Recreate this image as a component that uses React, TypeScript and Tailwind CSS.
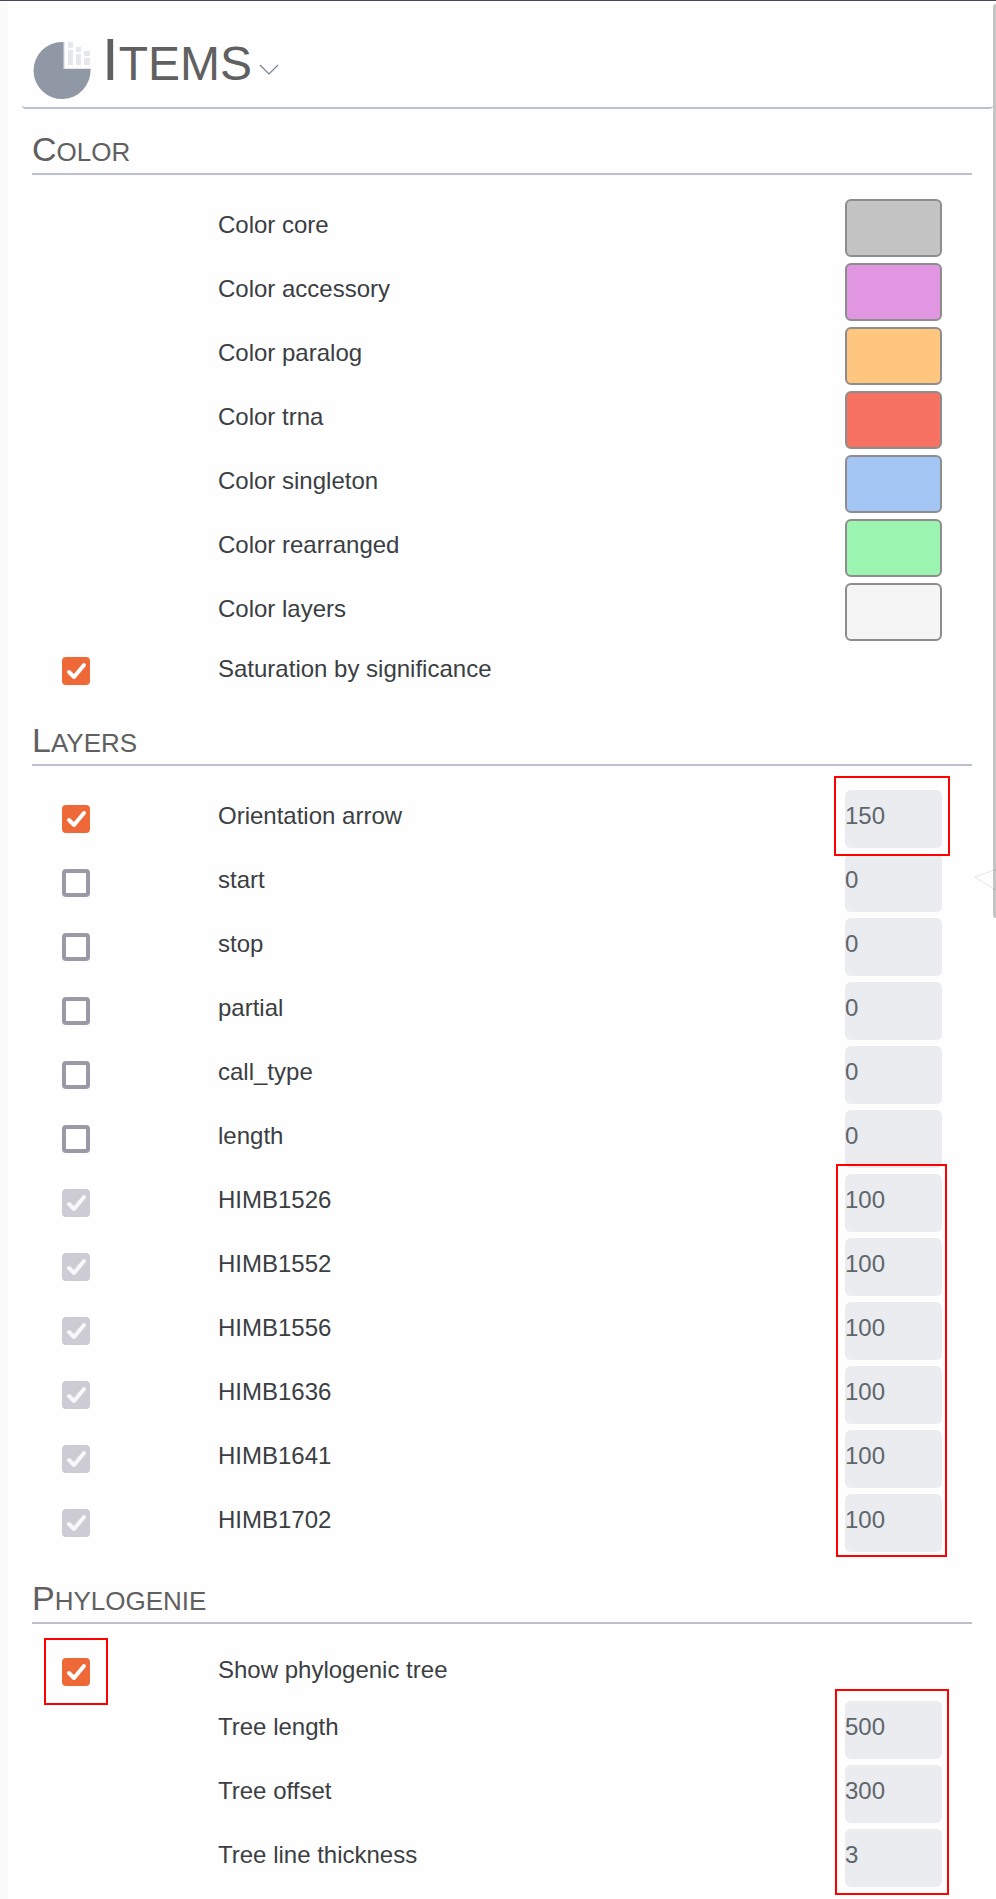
import React, { useId, useState } from "react";

const COLORS = [
  ["Color core", "bg-[#c4c4c4]"],
  ["Color accessory", "bg-[#e096e0]"],
  ["Color paralog", "bg-[#ffc680]"],
  ["Color trna", "bg-[#f87263]"],
  ["Color singleton", "bg-[#a4c6f4]"],
  ["Color rearranged", "bg-[#9bf4b0]"],
  ["Color layers", "bg-[#f5f5f5]"],
];

const OPTIONAL_LAYERS = ["start", "stop", "partial", "call_type", "length"];
const GENOMES = ["HIMB1526", "HIMB1552", "HIMB1556", "HIMB1636", "HIMB1641", "HIMB1702"];
const TREE = [
  ["Tree length", "500"],
  ["Tree offset", "300"],
  ["Tree line thickness", "3"],
];

function Highlight({ className }: { className: string }) {
  return <span className={"pointer-events-none absolute z-10 border-2 border-[#ff0000] " + className} />;
}

function Check({ id, on, disabled }: { id: string; on?: boolean; disabled?: boolean }) {
  const [checked, setChecked] = useState(!!on);
  return (
    <span className="relative block size-7">
      <input
        id={id}
        type="checkbox"
        checked={checked}
        disabled={disabled}
        onChange={(e) => setChecked(e.target.checked)}
        className="block size-7 appearance-none rounded border-4 border-[#9b99a8] bg-white checked:border-[#ee6838] checked:bg-[#ee6838] disabled:border-[#cdccd4] disabled:bg-[#cdccd4]"
      />
      {checked && (
        <svg viewBox="0 0 28 28" className="pointer-events-none absolute inset-0 size-7" fill="none">
          <path
            d="M7 15 L12 20 L22 8"
            stroke={disabled ? "#f7f7f8" : "#ffffff"}
            strokeWidth="4"
            strokeLinecap="round"
            strokeLinejoin="round"
          />
        </svg>
      )}
    </span>
  );
}

type RowProps = {
  label: string;
  check?: "on" | "off" | "locked";
  value?: string;
  swatch?: string;
  highlight?: string;
};

function Row({ label, check, value, swatch, highlight }: RowProps) {
  const id = useId();
  const compact = value === undefined && !swatch;
  return (
    <div
      className={
        "relative grid grid-cols-[156px_1fr_97px] items-center px-[30px] " + (compact ? "h-[53px]" : "h-16")
      }
    >
      <span>{check && <Check id={id + "c"} on={check !== "off"} disabled={check === "locked"} />}</span>
      <label
        htmlFor={compact ? id + "c" : id}
        className={"text-2xl text-[#3b3e43] " + (compact ? "pb-1" : "pb-1.5")}
      >
        {label}
      </label>
      {value !== undefined && (
        <input
          id={id}
          type="text"
          defaultValue={value}
          className="block h-[58px] w-full rounded-md bg-[#ebecf0] pb-1.5 text-2xl text-[#5f666b] outline-none"
        />
      )}
      {swatch && (
        <button id={id} type="button" className={"block h-[58px] w-full rounded-md border-2 border-[#8d8d8d] " + swatch} />
      )}
      {highlight && <Highlight className={highlight} />}
    </div>
  );
}

function Section({ title, children }: { title: string; children: React.ReactNode }) {
  return (
    <section>
      <h2 className="mb-[21px] border-b-2 border-[#bcc0cc] pt-5 pb-px text-[26px] leading-10 text-[#606060] uppercase first-letter:text-[34px]">
        {title}
      </h2>
      {children}
    </section>
  );
}

export default function App() {
  return (
    <div className="relative min-h-screen overflow-hidden border-t border-[#4c4659] bg-[#fafafa] pl-2 font-['Liberation_Sans',Arial,sans-serif]">
      <main className="min-h-screen bg-[#fefefe] pr-[3px] pl-[14px]">
        <header className="flex h-[108px] items-start rounded-b-sm border-b-2 border-[#bcc0cc] pt-6 pl-[10px]">
          <svg viewBox="0 0 60 60" className="mt-4 size-[60px]" aria-hidden="true">
            <path d="M31 1 H33 V27 H59 V29 H31 Z" fill="#e6e7eb" />
            <path d="M30 1 A28.5 28.5 0 1 0 58.5 28 L31.5 28 L31.5 1 Z" fill="#9098a6" />
            <path
              d="M36 1h5v6h-5zM36 9h5v15h-5zM44 6h5v5h-5zM44 13h5v11h-5zM52 10h6v5h-6zM52 17h6v7h-6z"
              fill="#e6e7eb"
            />
          </svg>
          <h1 className="ml-2.5 text-5xl leading-[70px] text-[#606060] uppercase first-letter:text-[60px]">Items</h1>
          <button type="button" aria-label="Expand items" className="mt-[39px] ml-1.5">
            <svg viewBox="0 0 22 12" className="h-3 w-[22px]" fill="none" stroke="#76828d" strokeWidth="1.2">
              <path d="M2 1 L11 10 L20 1" />
            </svg>
          </button>
        </header>
        <div className="flex flex-col gap-[3px] pr-[21px] pl-[10px]">
          <Section title="Color">
            {COLORS.map(([label, swatch]) => (
              <Row key={label} label={label} swatch={swatch} />
            ))}
            <Row label="Saturation by significance" check="on" />
          </Section>
          <Section title="Layers">
            <Row
              label="Orientation arrow"
              check="on"
              value="150"
              highlight="-top-[11px] right-[22px] -bottom-[5px] w-[116px]"
            />
            {OPTIONAL_LAYERS.map((label) => (
              <Row key={label} label={label} check="off" value="0" />
            ))}
            <div className="relative">
              {GENOMES.map((label) => (
                <Row key={label} label={label} check="locked" value="100" />
              ))}
              <Highlight className="-top-[7px] right-[25px] -bottom-[2px] w-[111px]" />
            </div>
          </Section>
          <Section title="Phylogenie">
            <Row label="Show phylogenic tree" check="on" highlight="-top-[7px] -bottom-[7px] left-3 w-16" />
            <div className="relative">
              {TREE.map(([label, value]) => (
                <Row key={label} label={label} value={value} />
              ))}
              <Highlight className="-top-[9px] right-[23px] -bottom-[5px] w-[114px]" />
            </div>
          </Section>
        </div>
      </main>
      <div className="absolute top-[3px] right-0 h-[914px] w-[3px] rounded-l bg-[#c4c4c4]" />
      <svg viewBox="0 0 22 24" className="absolute top-[867px] right-0 h-6 w-[22px]" fill="none" stroke="#000000" strokeOpacity="0.1">
        <path d="M23 1 L1 9 L23 23" />
      </svg>
    </div>
  );
}
